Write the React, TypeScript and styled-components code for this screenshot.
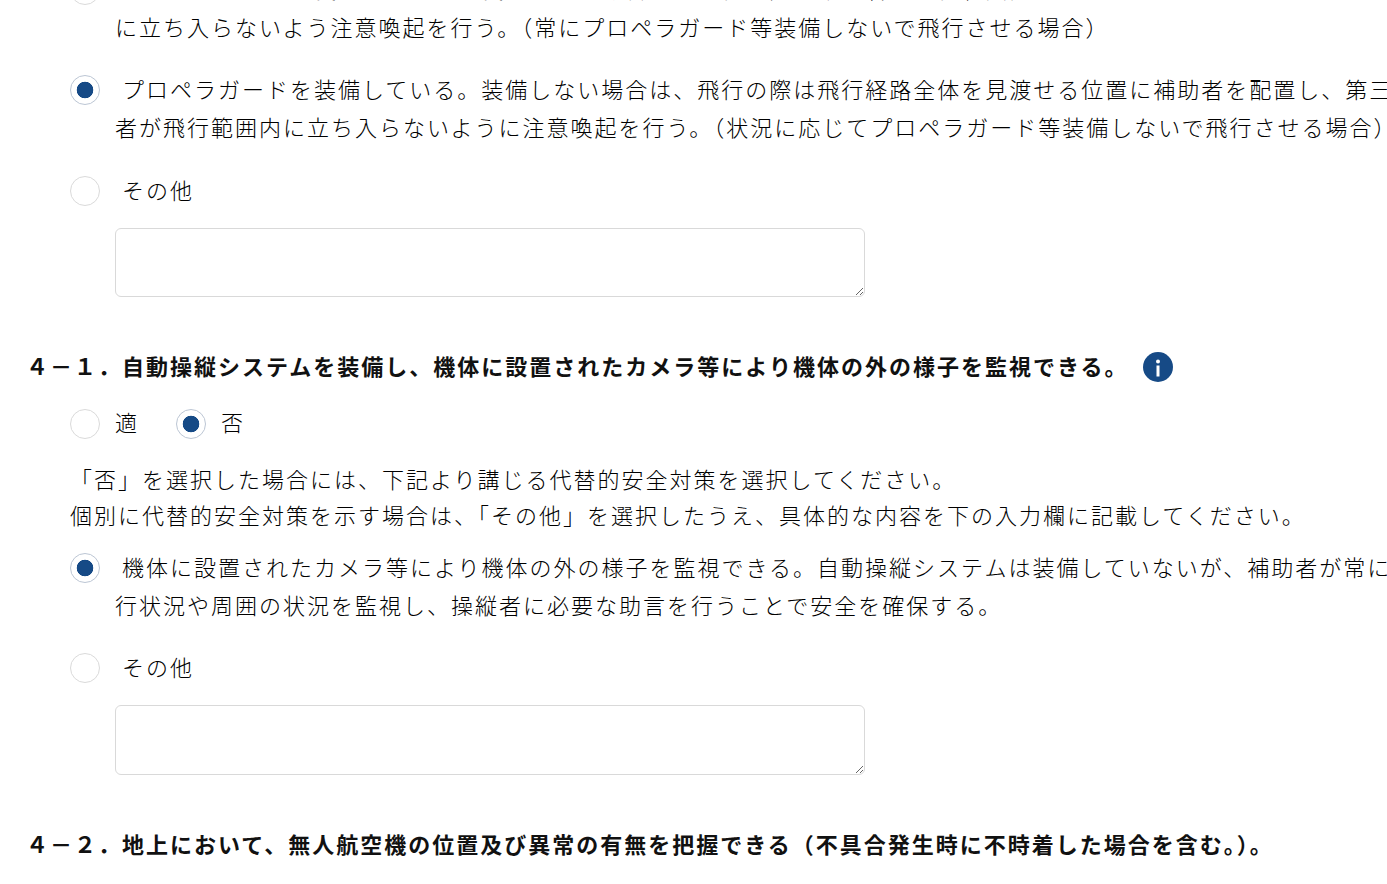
import styled, { createGlobalStyle } from "styled-components";

const GlobalStyle = createGlobalStyle`
  html, body {
    margin: 0;
    padding: 0;
    height: 884px;
    overflow: hidden;
    background: #fff;
  }
`;

const Viewport = styled.div`
  width: 1387px;
  height: 884px;
  overflow: hidden;
`;

// The screenshot is scrolled partway down the form
const Form = styled.form`
  width: 1420px;
  margin-top: -25px;
  padding-left: 30px;
  font-family: "Noto Sans CJK JP", sans-serif;
  font-size: 22px;
  line-height: 38px;
  letter-spacing: 2px;
  font-weight: 300;
  color: #000;
`;

const Question = styled.h3`
  display: flex;
  align-items: center;
  margin: 0 0 0 -4px;
  font-size: 22px;
  line-height: 38px;
  font-weight: 700;
  color: #111;
`;

const InfoIcon = styled.svg`
  width: 30px;
  height: 30px;
  margin: 4px 0 0 15px;
  flex: none;
`;

const Choices = styled.div`
  display: flex;
  align-items: center;
  height: 30px;
  margin: 25px 0 0 40px;
`;

const Choice = styled.label`
  display: flex;
  align-items: center;
  margin-right: 37px;
`;

const ChoiceText = styled.span`
  line-height: 30px;
  margin-bottom: 6px;
`;

const Radio = styled.input.attrs({ type: "radio", readOnly: true })`
  appearance: none;
  flex: none;
  width: 30px;
  height: 30px;
  margin: 0 15px 0 0;
  border: 1px solid ${(props) => (props.checked ? "#bcc6d4" : "#dadada")};
  border-radius: 50%;
  background: ${(props) =>
    props.checked
      ? "radial-gradient(circle, #164a86 0, #164a86 8px, #fff 8.6px)"
      : "#fff"};
`;

const Note = styled.p`
  margin: 21px 0 0 40px;
  line-height: 36px;
`;

const Option = styled.label<{ $gap?: number }>`
  display: flex;
  align-items: flex-start;
  margin: ${(props) => props.$gap ?? 30}px 0 0 40px;
  width: 1325px;
`;

const OptionText = styled.span`
  display: block;
  text-indent: 7px;
  margin-top: -6px;
`;

const Other = styled.textarea<{ $height: number }>`
  display: block;
  box-sizing: border-box;
  width: 750px;
  height: ${(props) => props.$height}px;
  margin: 20px 0 0 85px;
  border: 1px solid #d9d9d9;
  border-radius: 6px;
  outline: none;
  resize: vertical;
`;

const Section = styled.section<{ $gap: number }>`
  margin-top: ${(props) => props.$gap}px;
`;

const Info = () => (
  <InfoIcon viewBox="0 0 30 30">
    <circle cx="15" cy="15" r="15" fill="#164a86" />
    <circle cx="15" cy="9.5" r="2" fill="#fff" />
    <rect x="13.5" y="13.5" width="3" height="11" fill="#fff" />
  </InfoIcon>
);

export default function App() {
  return (
    <Viewport>
      <GlobalStyle />
      <Form>
        <Option $gap={0}>
          <Radio name="q3" />
          <OptionText>
            プロペラガードを装備している。装備しない場合は、飛行の際は第三者が飛行範囲内
            <br />
            に立ち入らないよう注意喚起を行う。（常にプロペラガード等装備しないで飛行させる場合）
          </OptionText>
        </Option>
        <Option>
          <Radio name="q3" checked />
          <OptionText>
            プロペラガードを装備している。装備しない場合は、飛行の際は飛行経路全体を見渡せる位置に補助者を配置し、第三者が飛行範囲内に立ち入らないように注意喚起を行う。（状況に応じてプロペラガード等装備しないで飛行させる場合）
          </OptionText>
        </Option>
        <Option $gap={31}>
          <Radio name="q3" />
          <OptionText>その他</OptionText>
        </Option>
        <Other $height={69} />

        <Section $gap={49}>
          <Question>
            ４－１．自動操縦システムを装備し、機体に設置されたカメラ等により機体の外の様子を監視できる。
            <Info />
          </Question>
          <Choices>
            <Choice>
              <Radio name="q41" />
              <ChoiceText>適</ChoiceText>
            </Choice>
            <Choice>
              <Radio name="q41" checked />
              <ChoiceText>否</ChoiceText>
            </Choice>
          </Choices>
          <Note>
            「否」を選択した場合には、下記より講じる代替的安全対策を選択してください。
            <br />
            個別に代替的安全対策を示す場合は、「その他」を選択したうえ、具体的な内容を下の入力欄に記載してください。
          </Note>
          <Option $gap={21}>
            <Radio name="q41b" checked />
            <OptionText>
              機体に設置されたカメラ等により機体の外の様子を監視できる。自動操縦システムは装備していないが、補助者が常に行状況や周囲の状況を監視し、操縦者に必要な助言を行うことで安全を確保する。
            </OptionText>
          </Option>
          <Option>
            <Radio name="q41b" />
            <OptionText>その他</OptionText>
          </Option>
          <Other $height={70} />
        </Section>

        <Section $gap={49}>
          <Question>
            ４－２．地上において、無人航空機の位置及び異常の有無を把握できる（不具合発生時に不時着した場合を含む。）。
          </Question>
        </Section>
      </Form>
    </Viewport>
  );
}
